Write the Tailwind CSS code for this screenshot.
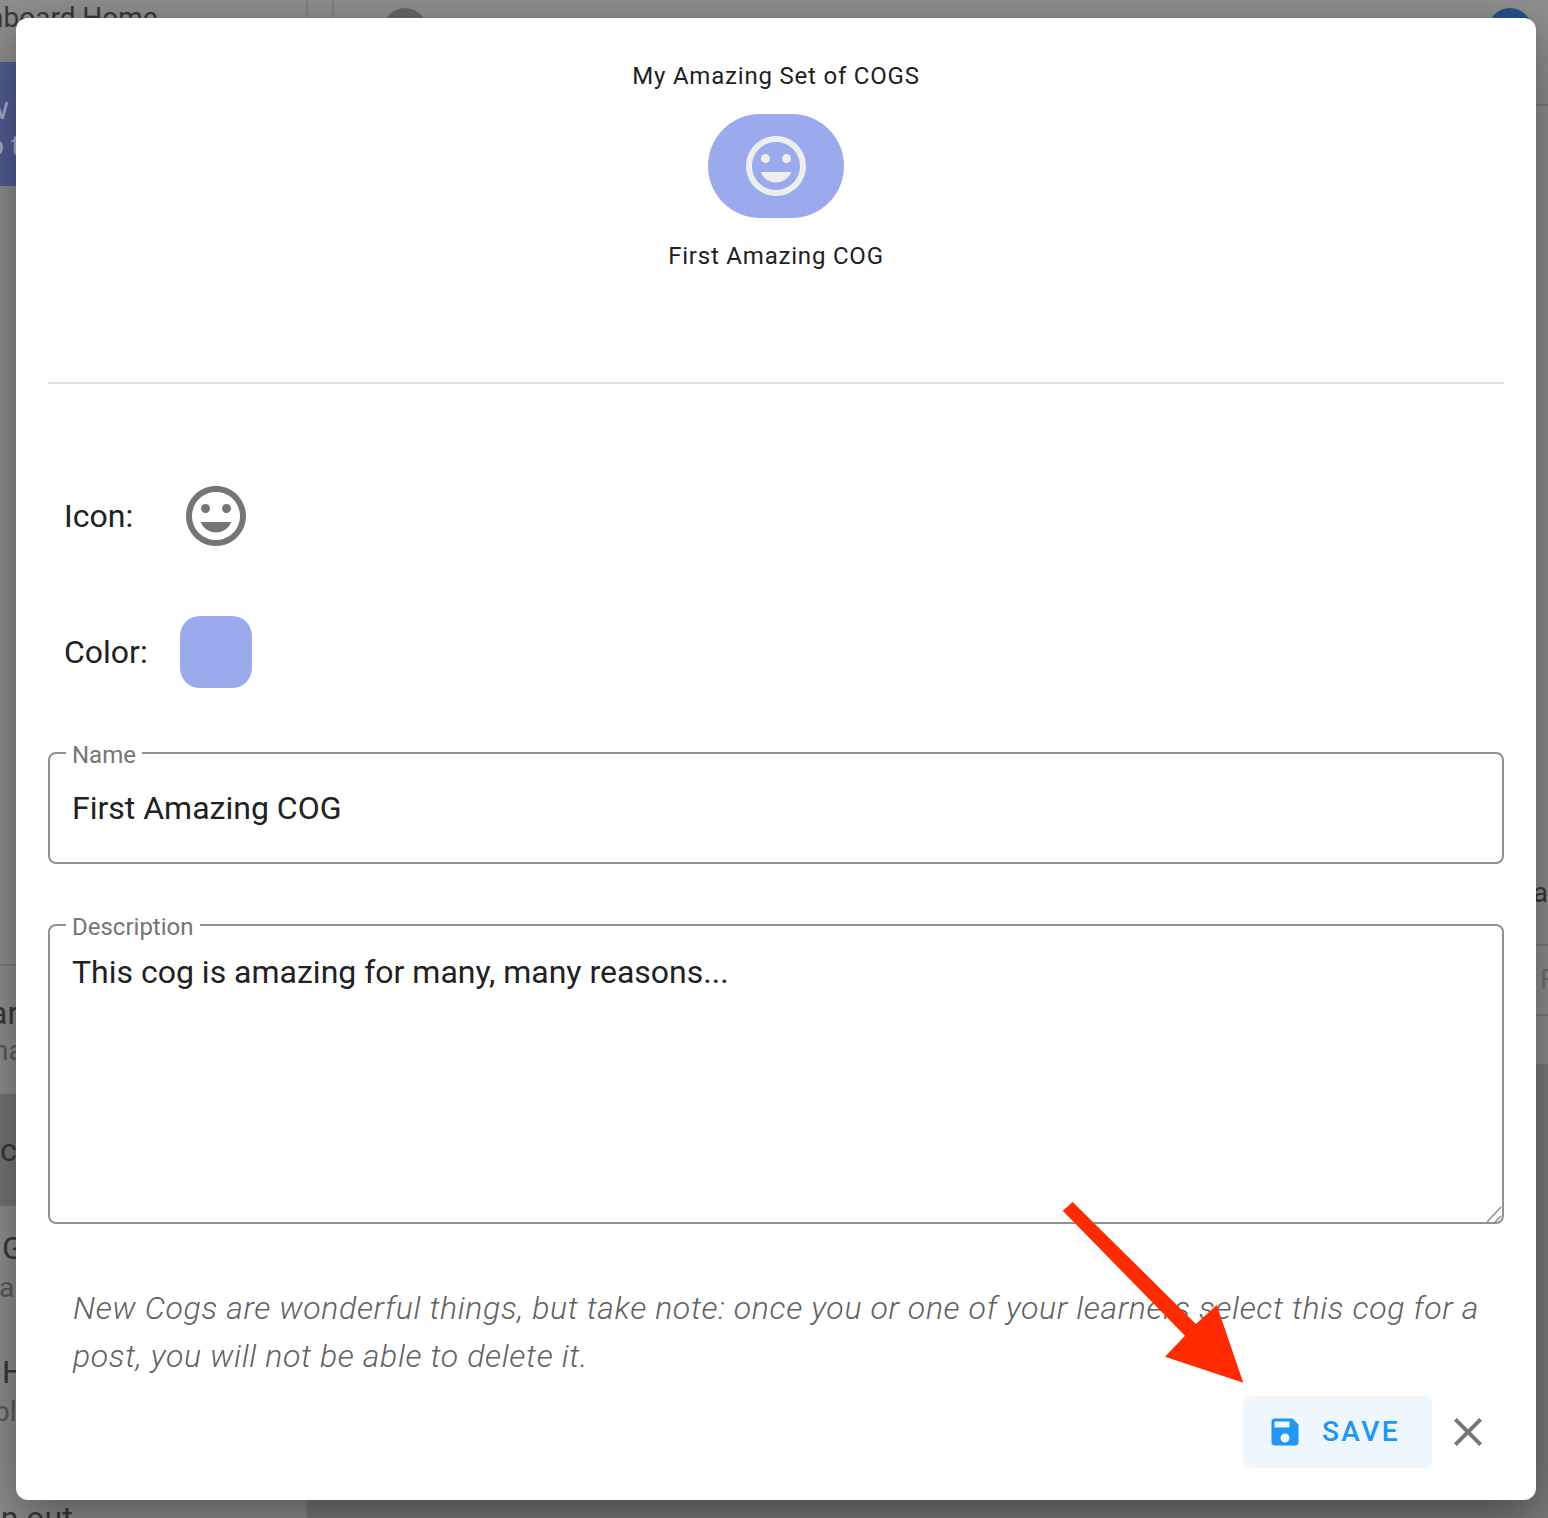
<!DOCTYPE html>
<html lang="en">
<head>
    <meta charset="UTF-8">
    <title>New COG</title>
    <script src="https://cdn.jsdelivr.net/npm/@tailwindcss/browser@4"></script>
</head>
<body class="bg-[#8e8e8e] font-['Roboto',sans-serif]">
    <!-- Dimmed page behind the dialog -->
    <div class="relative w-[1548px] h-[1518px] overflow-hidden flex">
        <!-- Sidebar -->
        <aside class="w-[308px] h-full border-r-2 border-[#808080] flex flex-col flex-shrink-0 text-[#383838] text-[32px] leading-[40px] whitespace-nowrap">
            <div class="h-[62px] -ml-[60px] flex-shrink-0 -translate-y-[2px] text-[28px]">Dashboard Home</div>
            <div class="h-[124px] flex-shrink-0 bg-[#515e92] text-[#aab1cc] pt-[26px]">
                <div class="-ml-[15px]">w</div>
                <div class="-ml-[12px] text-[28px] leading-[36px]">o t</div>
            </div>
            <div class="h-[780px] flex-shrink-0 border-b-2 border-[#7c7c7c]"></div>
            <div class="h-[128px] flex-shrink-0 pt-[27px]">
                <div class="-ml-[10px]">ar</div>
                <div class="-ml-[7px] text-[28px] leading-[36px] text-[#5a5a5a]">na</div>
            </div>
            <div class="h-[112px] flex-shrink-0 bg-[#757575] flex items-center">c</div>
            <div class="h-[124px] flex-shrink-0 pt-[22px]">
                <div class="ml-[2px]">G</div>
                <div class="-ml-[1px] text-[28px] leading-[40px] text-[#5a5a5a]">a</div>
            </div>
            <div class="h-[125px] flex-shrink-0 pt-[22px]">
                <div class="ml-[2px]">H</div>
                <div class="-ml-[6px] text-[28px] leading-[40px] text-[#5a5a5a]">bl</div>
            </div>
            <div class="-ml-[44px] mt-[43px]">Sign out</div>
        </aside>

        <!-- Main -->
        <main class="flex-1 flex flex-col min-w-0">
            <header class="h-[106px] border-b-2 border-[#7c7c7c] flex flex-shrink-0">
                <div class="w-[24px] h-full border-r-2 border-[#808080] box-content"></div>
                <div class="w-[44px] h-[44px] rounded-full bg-[#666666] ml-[49px] mt-[8px]"></div>
                <div class="w-[44px] h-[44px] rounded-full bg-[#24518a] ml-auto mr-[16px] mt-[8px]"></div>
            </header>
            <div class="flex-1 flex flex-col">
                <div class="h-[840px] flex-shrink-0 flex items-end justify-end border-b-2 border-[#7c7c7c] text-[#383838] text-[28px] leading-[36px] pb-[33px]">a</div>
                <div class="h-[70px] flex-shrink-0 border-b-2 border-[#7c7c7c] flex items-center pl-[1232px] text-[#707070] text-[28px] whitespace-nowrap">Fa</div>
                <div class="h-[48px] flex-shrink-0"></div>
                <div class="flex-1 bg-[#7a7a7a]"></div>
            </div>
        </main>

        <!-- Dialog -->
        <div class="absolute left-[16px] top-[18px] w-[1520px] h-[1482px] bg-white rounded-[12px] shadow-[0_16px_48px_rgba(0,0,0,0.4)] px-[32px] flex flex-col">
            <div class="pt-[42px] flex flex-col items-center text-[#212121] text-[24px] leading-[32px] tracking-[0.8px]">
                <div>My Amazing Set of COGS</div>
                <div class="mt-[22px] w-[136px] h-[104px] rounded-[52px] bg-[#9aaaec] flex items-center justify-center">
                    <svg class="w-[72px] h-[72px]" viewBox="0 0 24 24" fill="#eeeeee"><path d="M11.99 2C6.47 2 2 6.48 2 12s4.47 10 9.99 10C17.52 22 22 17.52 22 12S17.52 2 11.99 2zM12 20c-4.42 0-8-3.58-8-8s3.58-8 8-8 8 3.58 8 8-3.58 8-8 8zm3.5-9c.83 0 1.5-.67 1.5-1.5S16.33 8 15.5 8 14 8.67 14 9.5s.67 1.5 1.5 1.5zm-7 0c.83 0 1.5-.67 1.5-1.5S9.33 8 8.5 8 7 8.67 7 9.5 7.67 11 8.5 11zm3.5 6.5c2.33 0 4.31-1.46 5.11-3.5H6.89c.8 2.04 2.78 3.5 5.11 3.5z"/></svg>
                </div>
                <div class="mt-[22px]">First Amazing COG</div>
            </div>

            <div class="mt-[110px] h-[2px] bg-[#e0e0e0]"></div>

            <!-- Icon -->
            <div class="mt-[96px] pl-[16px] flex items-center text-[32px] text-[#212121]">
                <span class="w-[116px]">Icon:</span>
                <svg class="w-[72px] h-[72px]" viewBox="0 0 24 24" fill="#757575"><path d="M11.99 2C6.47 2 2 6.48 2 12s4.47 10 9.99 10C17.52 22 22 17.52 22 12S17.52 2 11.99 2zM12 20c-4.42 0-8-3.58-8-8s3.58-8 8-8 8 3.58 8 8-3.58 8-8 8zm3.5-9c.83 0 1.5-.67 1.5-1.5S16.33 8 15.5 8 14 8.67 14 9.5s.67 1.5 1.5 1.5zm-7 0c.83 0 1.5-.67 1.5-1.5S9.33 8 8.5 8 7 8.67 7 9.5 7.67 11 8.5 11zm3.5 6.5c2.33 0 4.31-1.46 5.11-3.5H6.89c.8 2.04 2.78 3.5 5.11 3.5z"/></svg>
            </div>

            <!-- Color -->
            <div class="mt-[64px] pl-[16px] flex items-center text-[32px] text-[#212121]">
                <span class="w-[116px]">Color:</span>
                <div class="w-[72px] h-[72px] rounded-[20px] bg-[#9aaaec]"></div>
            </div>

            <!-- Name -->
            <fieldset class="mt-[55px] h-[121px] border-2 border-[#919191] rounded-[8px] px-[14px]">
                <legend class="ml-[2px] px-[6px] h-[20px] text-[24px] leading-[24px] text-[#757575]">Name</legend>
                <input type="text" value="First Amazing COG" class="w-full mt-[25px] px-[8px] text-[32px] leading-[40px] text-[#212121] outline-none bg-transparent">
            </fieldset>

            <!-- Description -->
            <fieldset class="mt-[51px] h-[309px] border-2 border-[#919191] rounded-[8px] relative">
                <legend class="ml-[16px] px-[6px] h-[20px] text-[24px] leading-[24px] text-[#757575]">Description</legend>
                <textarea class="block w-full h-[287px] pl-[22px] pr-[22px] pt-[15px] text-[32px] leading-[44px] text-[#212121] outline-none bg-transparent resize-none">This cog is amazing for many, many reasons...</textarea>
                <svg class="absolute right-0 bottom-0 w-[16px] h-[16px]" viewBox="0 0 16 16" fill="none" stroke="#919191" stroke-width="1.5"><path d="M1 16 15 1M9 16l6-6"/></svg>
            </fieldset>

            <p class="mt-[60px] pl-[25px] pr-[20px] text-[32px] leading-[48px] italic font-light tracking-[0.63px] text-[#616161]">New Cogs are wonderful things, but take note: once you or one of your learners select this cog for a post, you will not be able to delete it.</p>

            <!-- Actions -->
            <div class="mt-[16px] flex items-center justify-end pr-[12px]">
                <button class="w-[189px] h-[72px] rounded-[8px] bg-[#eef6fe] flex items-center pl-[24px] gap-[19px] text-[#2196f3] text-[28px] font-medium tracking-[2.4px]">
                    <svg class="w-[36px] h-[36px]" viewBox="0 0 24 24" fill="currentColor"><path d="M17 3H5c-1.11 0-2 .9-2 2v14c0 1.1.89 2 2 2h14c1.1 0 2-.9 2-2V7l-4-4zm-5 16c-1.66 0-3-1.34-3-3s1.34-3 3-3 3 1.34 3 3-1.34 3-3 3zm3-10H5V5h10v4z"/></svg>
                    SAVE
                </button>
                <button class="ml-[12px] w-[48px] h-[48px]">
                    <svg class="w-[48px] h-[48px]" viewBox="0 0 24 24" fill="#757575"><path d="M19 6.41 17.59 5 12 10.59 6.41 5 5 6.41 10.59 12 5 17.59 6.41 19 12 13.41 17.59 19 19 17.59 13.41 12z"/></svg>
                </button>
            </div>
        </div>

        <!-- Annotation arrow -->
        <svg class="absolute left-0 top-0 w-[1548px] h-[1518px] pointer-events-none" viewBox="0 0 1548 1518">
            <polygon fill="#ff2a00" points="1062.7,1210.7 1072.7,1202 1196,1324 1216.7,1305 1243.3,1382.7 1165,1356.7 1185,1335.7"/>
        </svg>
    </div>
</body>
</html>
